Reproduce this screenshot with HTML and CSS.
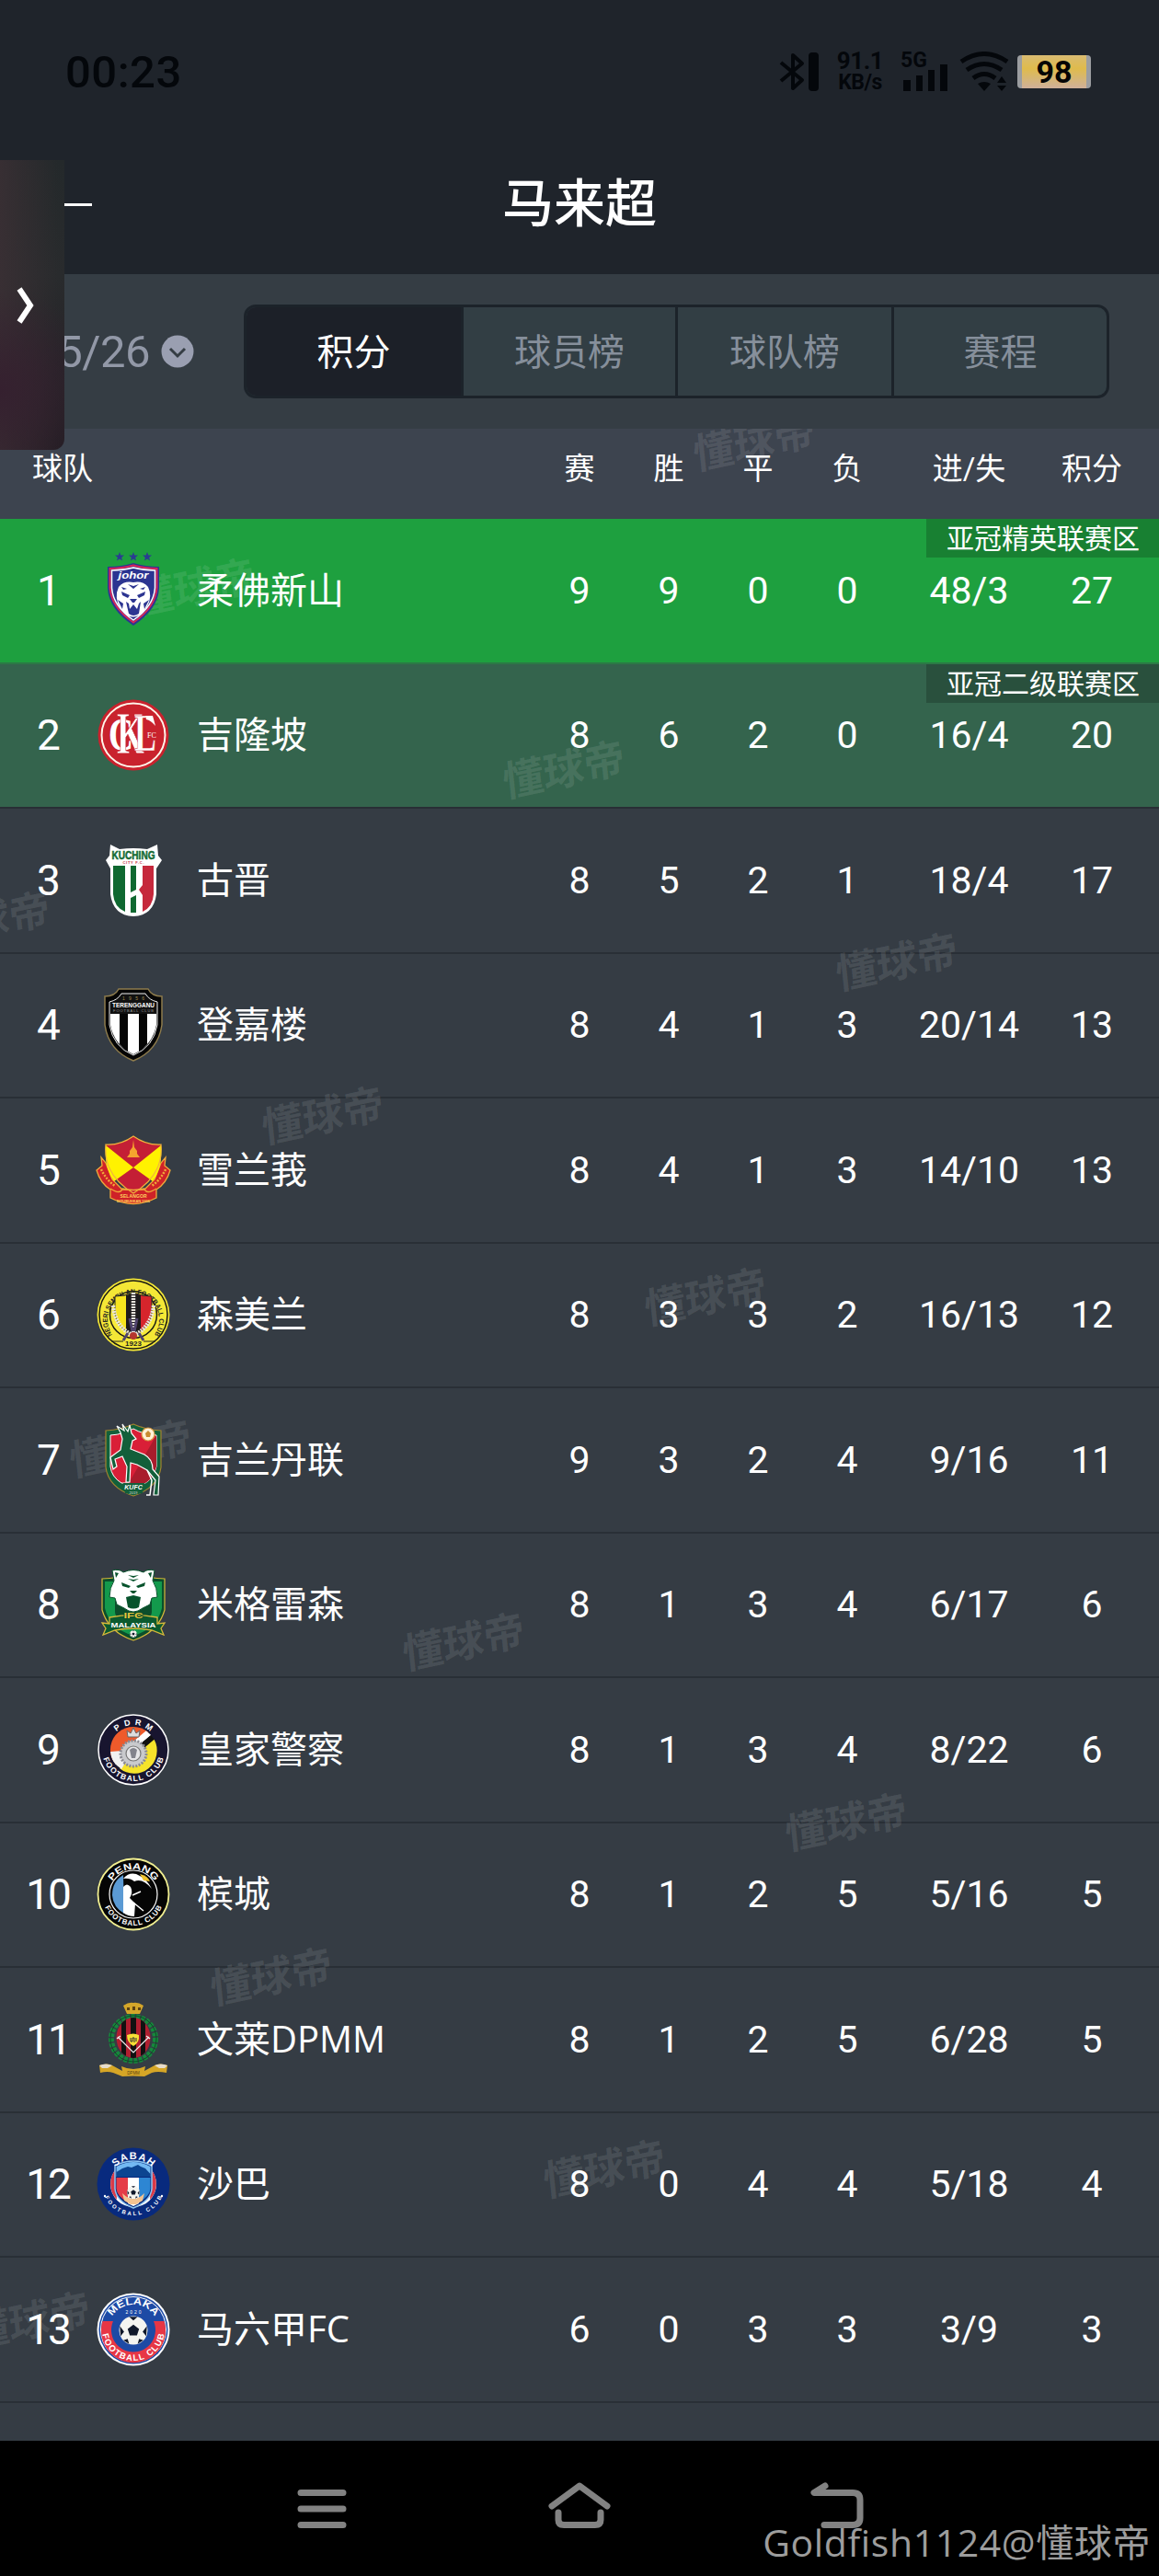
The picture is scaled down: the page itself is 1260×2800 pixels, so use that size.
FILE: index.html
```
<!DOCTYPE html>
<html lang="zh-CN">
<head>
    <meta charset="UTF-8">
    <meta name="viewport" content="width=device-width, initial-scale=1.0">
    <title>马来超</title>
    <link rel="stylesheet" href="styles.css">
</head>
<body>
    <!-- shared arcs for the round crests -->
    <svg class="defs" width="0" height="0">
        <defs>
            <path id="arcTop" d="M13 40 A27 27 0 0 1 67 40"/>
            <path id="arcRing" d="M16 60 A28 28 0 1 1 64 60"/>
            <path id="arcBottom" d="M6 40 A34 34 0 0 0 74 40"/>
            <g id="ball">
                <circle r="10" fill="#f4f4f0"/>
                <path d="M0 -4 L4 -1 L2.5 3.5 H-2.5 L-4 -1Z M-3 -9.5 H3 L0 -7Z M9.5 -3 L9 4 L6.5 1Z M-9.5 -3 L-9 4 L-6.5 1Z M4 6 L7 7 L3 9.5Z M-4 6 L-7 7 L-3 9.5Z" fill="#10182a"/>
            </g>
        </defs>
    </svg>

    <header class="top">
        <div class="status">
            <span class="time">00:23</span>
            <div class="status-icons">
                <svg class="bt" width="44" height="44" viewBox="0 0 44 44">
                    <path d="M2 12 L25 31 L15 40 V4 L25 13 L2 32" fill="none" stroke="#04070b" stroke-width="4" stroke-linejoin="round"/>
                    <rect x="32" y="1" width="11" height="42" rx="4" fill="#04070b"/>
                </svg>
                <div class="speed"><span>91.1</span><small>KB/s</small></div>
                <svg class="signal" width="52" height="44" viewBox="0 0 52 44">
                    <text x="0" y="17">5G</text>
                    <path d="M3 31h8v12h-8z M17 26h7v17h-7z M30 20h7v23h-7z M43 14h8v29h-8z" fill="#04070b"/>
                </svg>
                <svg class="wifi" width="54" height="44" viewBox="0 0 54 44">
                    <g fill="none" stroke="#04070b" stroke-width="5">
                        <path d="M2 11 Q27 -6 52 11"/>
                        <path d="M8 20 Q27 7 46 20"/>
                        <path d="M15 29 Q27 20 39 29"/>
                    </g>
                    <path d="M20 35 Q27 31 34 35 L27 43Z M41 34 L46 27 L51 34Z M41 37 H51 L46 43Z" fill="#04070b"/>
                </svg>
                <span class="battery">98</span>
            </div>
        </div>
        <div class="title-bar">
            <span class="back"></span>
            <h1>马来超</h1>
        </div>
    </header>

    <nav class="filter">
        <div class="season">
            <span>2025/26</span>
            <svg width="36" height="36" viewBox="0 0 36 36">
                <circle cx="18" cy="18" r="17.5" fill="#9a9fb1"/>
                <path d="M10 15 L18 23 L26 15" fill="none" stroke="#353d44" stroke-width="3"/>
            </svg>
        </div>
        <div class="tabs">
            <span class="tab active">积分</span>
            <span class="tab">球员榜</span>
            <span class="tab">球队榜</span>
            <span class="tab">赛程</span>
        </div>
    </nav>

    <main class="table">
        <div class="marks">
            <span style="left: 820px; top: 16px">懂球帝</span>
            <span style="left: 211px; top: 174px">懂球帝</span>
            <span style="left: 613px; top: 372px">懂球帝</span>
            <span style="left: 975px; top: 581px">懂球帝</span>
            <span style="left: -12px; top: 536px">懂球帝</span>
            <span style="left: 351px; top: 748px">懂球帝</span>
            <span style="left: 767px; top: 945px">懂球帝</span>
            <span style="left: 142px; top: 1110px">懂球帝</span>
            <span style="left: 504px; top: 1320px">懂球帝</span>
            <span style="left: 920px; top: 1516px">懂球帝</span>
            <span style="left: 295px; top: 1684px">懂球帝</span>
            <span style="left: 657px; top: 1893px">懂球帝</span>
            <span style="left: 32px; top: 2058px">懂球帝</span>
        </div>

        <div class="row head">
            <b class="team">球队</b><b>赛</b><b>胜</b><b>平</b><b>负</b><b>进/失</b><b>积分</b>
        </div>

        <div class="row acl-elite">
            <i>1</i>
            <svg class="crest" viewBox="0 0 80 80">
                <path d="M25 -2 l1.3 3.4 3.7 .2 -2.9 2.3 1 3.6 -3.1 -2 -3.1 2 1 -3.6 -2.9 -2.3 3.7 -.2Z M40 -2 l1.3 3.4 3.7 .2 -2.9 2.3 1 3.6 -3.1 -2 -3.1 2 1 -3.6 -2.9 -2.3 3.7 -.2Z M55 -2 l1.3 3.4 3.7 .2 -2.9 2.3 1 3.6 -3.1 -2 -3.1 2 1 -3.6 -2.9 -2.3 3.7 -.2Z" fill="#2a3b92"/>
                <path d="M12 14 Q27 14 40 10 Q53 14 68 14 V37 Q67 60 40 78 Q13 60 12 37Z" fill="#2c3591"/>
                <path d="M14.500 16 Q28 16 40 12.500 Q52 16 65.500 16 V37 Q64 58 40 74.500 Q16 58 14.500 37Z" fill="#2c3591" stroke="#d8245a" stroke-width="2"/>
                <path d="M16.500 18 Q29 18 40 15 Q51 18 63.500 18 V37 Q62 57 40 72 Q18 57 16.500 37Z" fill="#2c3591" stroke="#fff" stroke-width="1.500"/>
                <text x="40" y="27" font-size="10" font-weight="bold" font-style="italic" fill="#fff" text-anchor="middle" textLength="33" lengthAdjust="spacingAndGlyphs">johor</text>
                <path d="M24 36 Q30 29 40 31 Q50 29 56 36 Q61 46 55 57 L51 63 Q40 73 31 65 Q20 55 22 42Z" fill="#fff"/>
                <path d="M27 41 L36 45 L34 48 L28 45Z M53 41 L44 45 L46 48 L52 45Z M36 49 H44 L41 53 H39Z M34 33 L40 38 L46 33 L40 35Z M32 52 L35 54 L36 60 L40 55 L44 60 L46 54 L48 52 L46 65 Q40 69 35 65Z M23 50 L29 54 L28 60Z M57 50 L51 54 L52 60Z M27 36 L33 38 L29 39Z M53 36 L47 38 L51 39Z" fill="#2c3591"/>
            </svg>
            <strong>柔佛新山</strong>
            <span>9</span><span>9</span><span>0</span><span>0</span><span>48/3</span><span>27</span>
            <em>亚冠精英联赛区</em>
        </div>

        <div class="row acl-two">
            <i>2</i>
            <svg class="crest" viewBox="0 0 80 80">
                <circle cx="40" cy="40" r="38.500" fill="#c9222d"/>
                <circle cx="40" cy="40" r="34.500" fill="none" stroke="#fff5ea" stroke-width="2"/>
                <g fill="#fff" font-family="Liberation Serif, serif" font-weight="bold">
                    <text x="13" y="56" font-size="50" textLength="27" lengthAdjust="spacingAndGlyphs">C</text>
                    <text x="22" y="60" font-size="66" textLength="30" lengthAdjust="spacingAndGlyphs" stroke="#c9222d" stroke-width=".8">K</text>
                    <text x="41" y="57" font-size="58" textLength="24" lengthAdjust="spacingAndGlyphs" stroke="#c9222d" stroke-width=".6">L</text>
                    <text x="55" y="43" font-size="8" font-weight="normal">FC</text>
                </g>
                <path d="M53 19 H61 L64 30 Q59 24 54 23" fill="#fff"/>
            </svg>
            <strong>吉隆坡</strong>
            <span>8</span><span>6</span><span>2</span><span>0</span><span>16/4</span><span>20</span>
            <em>亚冠二级联赛区</em>
        </div>

        <div class="row">
            <i>3</i>
            <svg class="crest" viewBox="0 0 80 80">
                <path d="M15 1 L25 6 Q40 4 55 6 L66 1 L67 13 L71 18 L65 27 V55 Q62 78 40 79 Q18 78 15 55 V27 L10 18 L14 13Z" fill="#fff"/>
                <text x="40" y="17" font-size="12" font-weight="bold" fill="#156b35" stroke="#156b35" stroke-width=".5" text-anchor="middle" textLength="47" lengthAdjust="spacingAndGlyphs">KUCHING</text>
                <text x="40" y="22" font-size="4" font-weight="bold" fill="#c22c3c" text-anchor="middle" textLength="23">CITY F.C.</text>
                <path d="M18 24 H31 V74 Q19 69 18 55Z" fill="#0f6830"/>
                <path d="M37 24 H43 V50 L37 53Z M37 59 L43 56 V75 H37Z" fill="#0f6830"/>
                <path d="M50 24 H62 V55 Q61 69 50 74 V56 L46 50 L50 45Z" fill="#c6283c"/>
            </svg>
            <strong>古晋</strong>
            <span>8</span><span>5</span><span>2</span><span>1</span><span>18/4</span><span>17</span>
        </div>

        <div class="row">
            <i>4</i>
            <svg class="crest" viewBox="0 0 80 80">
                <path d="M24 1 H56 Q60 9 71 9 V40 Q67 68 40 79 Q13 68 9 40 V9 Q20 9 24 1Z" fill="#050505" stroke="#8d7b4c" stroke-width="1.500"/>
                <path d="M27 6 H53 Q57 13 66 15 V40 Q62 64 40 73 Q18 64 14 40 V15 Q23 13 27 6Z" fill="#111" stroke="#eee" stroke-width="1"/>
                <path d="M15 28 H65 V40 Q61 62 40 72 Q19 62 15 40Z" fill="#fff"/>
                <path d="M25 28 H34 V69 Q29 66 25 61Z M46 28 H55 V61 Q51 66 46 69Z" fill="#050505"/>
                <text x="40" y="13" font-size="5" fill="#a08a50" text-anchor="middle" textLength="24">1956</text>
                <text x="40" y="21" font-size="8" font-weight="bold" fill="#fff" text-anchor="middle" textLength="46" lengthAdjust="spacingAndGlyphs">TERENGGANU</text>
                <text x="40" y="26" font-size="4" fill="#999" text-anchor="middle" textLength="44">FOOTBALL CLUB</text>
            </svg>
            <strong>登嘉楼</strong>
            <span>8</span><span>4</span><span>1</span><span>3</span><span>20/14</span><span>13</span>
        </div>

        <div class="row">
            <i>5</i>
            <svg class="crest" viewBox="0 0 80 80">
                <path d="M5 26 L10 32 L17 50 L28 61 H52 L63 50 L70 32 L75 26 L74 35 L80 40 Q76 54 65 61 L65 70 Q40 83 15 70 L15 61 Q4 54 0 40 L6 35Z" fill="#cf2228" stroke="#f0a93a" stroke-width="1.300"/>
                <path d="M40 3 Q54 13 70 12 Q73 45 40 65 Q7 45 10 12 Q26 13 40 3Z" fill="#c41f35"/>
                <path d="M10 13 L40 37 L19 52 Q8 38 10 13Z M70 13 L40 37 L61 52 Q72 38 70 13Z" fill="#fff200"/>
                <path d="M40 3 Q54 13 70 12 Q73 45 40 65 Q7 45 10 12 Q26 13 40 3Z" fill="none" stroke="#f2b63c" stroke-width="1.200"/>
                <path d="M40 7 L41 15 L44 19 V22 L47 26 H33 L36 22 V19 L39 15Z" fill="#f5a52e"/>
                <path d="M15 60 Q26 67 28 60 Q40 63 52 60 Q54 67 65 60" fill="none" stroke="#f0a93a" stroke-width="1.300"/>
                <text x="40" y="70" font-size="5" font-weight="bold" fill="#ffd15c" text-anchor="middle" textLength="29">SELANGOR</text>
                <text x="40" y="75" font-size="4" font-weight="bold" fill="#ffd15c" text-anchor="middle" textLength="36">DITUBUHKAN 1936</text>
                <path d="M5 39 Q10 50 20 57 M75 39 Q70 50 60 57" fill="none" stroke="#f0a93a" stroke-width="2.500" stroke-dasharray="2 1.500"/>
            </svg>
            <strong>雪兰莪</strong>
            <span>8</span><span>4</span><span>1</span><span>3</span><span>14/10</span><span>13</span>
        </div>

        <div class="row">
            <i>6</i>
            <svg class="crest" viewBox="0 0 80 80">
                <circle cx="40" cy="40" r="39.500" fill="#f4e736"/>
                <circle cx="40" cy="40" r="37" fill="none" stroke="#1a1a14" stroke-width="1.500"/>
                <circle cx="40" cy="40" r="25.500" fill="#f7ea3a" stroke="#1a1a14" stroke-width="1.500"/>
                <text font-size="7.500" font-weight="bold" fill="#222"><textPath href="#arcRing" startOffset="50%" text-anchor="middle" textLength="122" lengthAdjust="spacingAndGlyphs">NEGERI SEMBILAN FOOTBALL CLUB</textPath></text>
                <path d="M20 20 Q31 20 40 16 V62 Q21 54 20 38Z" fill="#f7e41e" stroke="#222"/>
                <path d="M40 16 Q49 20 60 20 V38 Q59 54 40 62Z" fill="#d6252c" stroke="#222"/>
                <path d="M32 19 Q36 18 40 16 Q44 18 48 19 V58 L40 62 L32 58Z" fill="#1d1a1c"/>
                <path d="M40 16 V63 M18 30 Q20 52 38 62 M62 30 Q60 52 42 62" fill="none" stroke="#e8e4dc" stroke-width="4.500" stroke-dasharray="2 1"/>
                <path d="M34 60 L29 68 M46 60 L51 68 M36 44 L39 58 M44 44 L41 58" stroke="#50446e" stroke-width="3"/>
                <circle cx="40" cy="63" r="4" fill="#b5352e"/>
                <path d="M16 69 H29 M51 69 H64" stroke="#222"/>
                <text x="40" y="74" font-size="8" font-weight="bold" fill="#222" text-anchor="middle">1923</text>
            </svg>
            <strong>森美兰</strong>
            <span>8</span><span>3</span><span>3</span><span>2</span><span>16/13</span><span>12</span>
        </div>

        <div class="row">
            <i>7</i>
            <svg class="crest" viewBox="0 0 80 80">
                <path d="M10 8 Q27 7 40 1 Q53 7 70 8 V48 Q67 70 40 79 Q13 70 10 48Z" fill="#12603a" stroke="#a3842e" stroke-width="1.200"/>
                <path d="M15 13 Q30 12 40 6 Q50 12 65 13 V47 Q62 60 53 65 H27 Q16 58 15 47Z" fill="#d91f37" stroke="#fff" stroke-width="1"/>
                <path d="M65 13 V47 Q62 60 53 65 H35Z" fill="#a91c2c"/>
                <circle cx="56" cy="12" r="7" fill="#fff2d8" stroke="#d89a41" stroke-width="1.200"/>
                <path d="M56 8 l3 3 -1 4 h-4 l-1 -4Z" fill="#c98c31"/>
                <path d="M22 3 L30 8 L28 1 L34 9 L36 2 L38 11 L43 17 L39 19 L37 28 L52 34 Q61 39 61 50 L68 58 L67 78 H62 L64 62 L55 51 L44 45 L37 43 L36 64 H32 L33 47 L28 36 L20 39 L22 47 L18 50 L15 37 L26 29 L28 17 L26 10Z" fill="#135f3a" stroke="#fff" stroke-width="1.200"/>
                <path d="M55 51 L60 62 L58 78 H54" fill="none" stroke="#fff" stroke-width="1.500"/>
                <path d="M29 65 H52 L50 76 L40 78 L31 76Z" fill="#135f3a"/>
                <text x="40" y="72" font-size="7" font-weight="bold" font-style="italic" fill="#fff" text-anchor="middle">KUFC</text>
                <text x="40" y="77" font-size="4" fill="#ddd" text-anchor="middle">2019</text>
            </svg>
            <strong>吉兰丹联</strong>
            <span>9</span><span>3</span><span>2</span><span>4</span><span>9/16</span><span>11</span>
        </div>

        <div class="row">
            <i>8</i>
            <svg class="crest" viewBox="0 0 80 80">
                <path d="M6 12 Q23 12 40 5 Q57 12 74 12 V46 Q67 70 40 79 Q13 70 6 46Z" fill="#0b4e2b" stroke="#d5b83a" stroke-width="1.200"/>
                <path d="M9 15 L20 15 V48 Q20 58 40 60 Q60 58 60 48 V15 L71 15 V44 Q66 66 40 74 Q14 66 9 44Z" fill="#139a4c"/>
                <path d="M17 3 Q25 1 29 5 Q40 0 51 5 Q55 1 63 3 L61 14 Q66 22 66 32 L60 33 L58 40 L50 44 Q40 52 30 44 L22 40 L20 33 L14 32 Q14 22 19 14Z" fill="#fff" stroke="#07532c"/>
                <path d="M27 16 L37 20 L35 22 L28 20Z M53 16 L43 20 L45 22 L52 20Z M36 25 H44 L41 28 H39Z M32 32 L40 30 L48 32 L46 43 Q40 46 34 43Z M34 8 L40 11 L46 8 L40 9Z M34 12 L40 15 L46 12 L40 13Z M20 5 L24 6 L21 11Z M60 5 L56 6 L59 11Z" fill="#07532c"/>
                <path d="M6 60 L14 61 V54 Q40 49 66 54 V61 L74 60 L70 66 L73 73 L60 68 Q40 64 20 68 L7 73 L10 66Z" fill="#0b5a2e" stroke="#d5b83a" stroke-width="1.300"/>
                <text x="40" y="55" font-size="9" font-weight="bold" fill="#e3c53d" stroke="#0b4e2b" stroke-width="1.500" paint-order="stroke" text-anchor="middle" textLength="21" lengthAdjust="spacingAndGlyphs">IFC</text>
                <text x="40" y="65" font-size="8" font-weight="bold" fill="#fff" text-anchor="middle" textLength="49" lengthAdjust="spacingAndGlyphs">MALAYSIA</text>
                <use href="#ball" transform="translate(40 72) scale(.38)"/>
            </svg>
            <strong>米格雷森</strong>
            <span>8</span><span>1</span><span>3</span><span>4</span><span>6/17</span><span>6</span>
        </div>

        <div class="row">
            <i>9</i>
            <svg class="crest" viewBox="0 0 80 80">
                <circle cx="40" cy="40" r="38" fill="#18152f" stroke="#fff" stroke-width="1.500"/>
                <g transform="rotate(-40 40 40)">
                    <path d="M15.300 36 A25 25 0 0 1 64.700 36Z" fill="#ee5a2b"/>
                    <path d="M16 33 H64 L65 40 H15Z" fill="#fff"/>
                    <path d="M15 40 H65 L64.500 47 H15.500Z" fill="#111"/>
                    <path d="M15.500 46 H64.500 A25 25 0 0 1 15.500 46Z" fill="#f6e32b"/>
                </g>
                <path d="M15 42 L40 40 L27 61 Q16 54 15 42Z" fill="#f1f1f1"/>
                <circle cx="40" cy="44" r="14" fill="#c9cacd" stroke="#8a8a92" stroke-dasharray="2 1.500" stroke-width="3"/>
                <circle cx="40" cy="44" r="8" fill="#e6e6e8" stroke="#777" stroke-width="1.200"/>
                <path d="M36 40 Q40 36 44 40 L42 49 H38Z" fill="#82838c"/>
                <path d="M34 26 L33 19 L37 22 L40 16 L43 22 L47 19 L46 26Z" fill="#ddd" stroke="#666"/>
                <text font-size="9" font-weight="bold" fill="#fff"><textPath href="#arcTop" startOffset="50%" text-anchor="middle" textLength="40">PDRM</textPath></text>
                <text font-size="8.500" font-weight="bold" fill="#fff"><textPath href="#arcBottom" startOffset="50%" text-anchor="middle" textLength="88">FOOTBALL CLUB</textPath></text>
            </svg>
            <strong>皇家警察</strong>
            <span>8</span><span>1</span><span>3</span><span>4</span><span>8/22</span><span>6</span>
        </div>

        <div class="row">
            <i>10</i>
            <svg class="crest" viewBox="0 0 80 80">
                <circle cx="40" cy="40" r="38.500" fill="#050505" stroke="#f1ef91" stroke-width="1.800"/>
                <circle cx="40" cy="40" r="26" fill="none" stroke="#fff" stroke-width="1.200"/>
                <path d="M29 19 Q17 26 17 41 Q18 54 30 61Z" fill="#5b9ad4"/>
                <path d="M29 32 Q33 27 37 32 Q40 38 36 44 L42 50 L41 64 Q34 64 29 60Z" fill="#fff"/>
                <path d="M29 23 Q37 14 47 20 Q54 23 60 34 Q50 22 41 26 Q36 22 29 23Z" fill="#fff"/>
                <path d="M47 18 Q56 20 58 26 L51 25Z" fill="#f0c32e"/>
                <path d="M39 41 L48 37 M40 49 L51 58" stroke="#fff" stroke-width="1.500"/>
                <text font-size="10" font-weight="bold" fill="#fff"><textPath href="#arcTop" startOffset="50%" text-anchor="middle" textLength="55" lengthAdjust="spacingAndGlyphs">PENANG</textPath></text>
                <text font-size="8" font-weight="bold" fill="#fff"><textPath href="#arcBottom" startOffset="50%" text-anchor="middle" textLength="78">FOOTBALL CLUB</textPath></text>
            </svg>
            <strong>槟城</strong>
            <span>8</span><span>1</span><span>2</span><span>5</span><span>5/16</span><span>5</span>
        </div>

        <div class="row">
            <i>11</i>
            <svg class="crest" viewBox="0 0 80 80">
                <path d="M33 12 L29 3 Q35 -1 40 0 Q45 -1 51 3 L47 12Z" fill="#d4a62a"/>
                <path d="M33 5 h3 v3 h-3Z M39 4 h3 v4 h-3Z M45 5 h3 v3 h-3Z" fill="#5c4212"/>
                <circle cx="40" cy="39" r="24" fill="none" stroke="#16873c" stroke-width="6" stroke-dasharray="4 1.500"/>
                <circle cx="40" cy="39" r="25" fill="none" stroke="#0b4d24" stroke-width="1"/>
                <clipPath id="dpmm"><ellipse cx="40" cy="38" rx="18.500" ry="22"/></clipPath>
                <g clip-path="url(#dpmm)">
                    <path d="M20 14 H60 V62 H20Z" fill="#b01f30"/>
                    <path d="M27 14h5v48h-5Z M37 14h6v48h-6Z M48 14h5v48h-5Z" fill="#111"/>
                </g>
                <path d="M33 35 Q40 32 46 35 Q47 43 40 47 Q33 43 33 35Z" fill="#f7df35"/>
                <path d="M37 38 v4 h2 v-4 h2 v5 M43 38 v4" fill="none" stroke="#333"/>
                <path d="M23 37 L40 54 L57 37 M22 39 L26 36 M58 39 L54 36" fill="none" stroke="#eee" stroke-width="1.200"/>
                <path d="M3 68 Q12 65 17 68 L28 74 L27 69 Q40 75 53 69 L52 74 L63 68 Q68 65 77 68 L76 76 Q66 74 60 76 L52 80 Q40 79 28 80 L18 76 Q12 74 4 76Z" fill="#d6a626"/>
                <path d="M3 68 Q10 65 17 68 L12 71 L6 71Z M77 68 Q70 65 63 68 L68 71 L74 71Z" fill="#e6dccb"/>
                <text x="40" y="78" font-size="4.500" fill="#5c4212" text-anchor="middle">DPMM</text>
            </svg>
            <strong>文莱DPMM</strong>
            <span>8</span><span>1</span><span>2</span><span>5</span><span>6/28</span><span>5</span>
        </div>

        <div class="row">
            <i>12</i>
            <svg class="crest" viewBox="0 0 80 80">
                <circle cx="40" cy="40" r="39.500" fill="#082a7e"/>
                <circle cx="40" cy="40" r="25" fill="#fff"/>
                <path d="M20 25 A25 25 0 0 0 22 57Z M60 25 A25 25 0 0 1 58 57Z" fill="#d93a48"/>
                <path d="M20 20 Q40 10 60 20 V45 Q59 58 40 66 Q21 58 20 45Z" fill="#082a7e" stroke="#8dc6f2" stroke-width="1.500"/>
                <path d="M21.500 21 Q40 11 58.500 21 V32 H21.500Z" fill="#73b9f2"/>
                <path d="M21.500 27 L28 23 L34 21 L38 22 L45 19 L48 21 L53 23 L58.500 29 V32 H21.500Z" fill="#0c4591"/>
                <path d="M21.500 33 H34 V60 Q22 53 21.500 45Z" fill="#e53c48"/>
                <path d="M34 33 H46 V61 L40 64 L34 61Z" fill="#fff"/>
                <path d="M46 33 H58.500 V45 Q58 53 46 60Z" fill="#2d86d3"/>
                <path d="M28 50 Q40 62 52 50 L50 58 L43 62 H37 L30 58Z" fill="#f3c391"/>
                <use href="#ball" transform="translate(40 49) scale(.7)"/>
                <text font-size="11" font-weight="bold" fill="#fff"><textPath href="#arcTop" startOffset="50%" text-anchor="middle" textLength="44">SABAH</textPath></text>
                <text font-size="6" font-weight="bold" fill="#fff"><textPath href="#arcBottom" startOffset="50%" text-anchor="middle" textLength="78">FOOTBALL CLUB</textPath></text>
                <circle cx="9" cy="53" r="1.200" fill="#fff"/><circle cx="71" cy="53" r="1.200" fill="#fff"/>
            </svg>
            <strong>沙巴</strong>
            <span>8</span><span>0</span><span>4</span><span>4</span><span>5/18</span><span>4</span>
        </div>

        <div class="row">
            <i>13</i>
            <svg class="crest" viewBox="0 0 80 80">
                <circle cx="40" cy="40" r="39.500" fill="#fff"/>
                <circle cx="40" cy="40" r="37.500" fill="#1d4aa5"/>
                <circle cx="40" cy="40" r="35.500" fill="#1d4aa5" stroke="#fff" stroke-width="1"/>
                <path d="M6.500 31 A35 35 0 1 0 73.500 31 L62 31 A24 24 0 1 1 18 31Z" fill="#e73645"/>
                <use href="#ball" transform="translate(40 41) scale(1.550)"/>
                <text font-size="11" font-weight="bold" fill="#fff"><textPath href="#arcTop" startOffset="50%" text-anchor="middle" textLength="55" lengthAdjust="spacingAndGlyphs">MELAKA</textPath></text>
                <text x="40" y="23" font-size="5" fill="#fff" text-anchor="middle" textLength="17">2020</text>
                <text font-size="9.500" font-weight="bold" fill="#fff"><textPath href="#arcBottom" startOffset="50%" text-anchor="middle" textLength="96">FOOTBALL CLUB</textPath></text>
            </svg>
            <strong>马六甲FC</strong>
            <span>6</span><span>0</span><span>3</span><span>3</span><span>3/9</span><span>3</span>
        </div>
    </main>

    <footer class="sysnav">
        <svg width="60" height="60" viewBox="0 0 60 60">
            <path d="M7 12.500 H53 M7 30 H53 M7 47.500 H53"/>
        </svg>
        <svg width="70" height="60" viewBox="0 0 70 60">
            <path d="M5 27 L35 5 L65 27 M12 34 V42 Q12 47.500 18 47.500 H52 Q58 47.500 58 42 V34"/>
        </svg>
        <svg width="60" height="60" viewBox="0 0 60 60">
            <path d="M17 5 L5 12.500 H47 Q55 12.500 55 20 V40 Q55 47.500 47 47.500 H16"/>
        </svg>
        <p class="credit">Goldfish1124@懂球帝</p>
    </footer>

    <!-- edge drawer handle -->
    <aside class="drawer">
        <svg width="24" height="44" viewBox="0 0 24 44">
            <path d="M4 4 L16 22 L4 40" fill="none" stroke="#fff" stroke-width="6"/>
        </svg>
    </aside>
</body>
</html>
```
FILE: styles.css
```
* { box-sizing: border-box; }
body { position: relative; width: 1260px; height: 2800px; margin: 0; overflow: hidden; background: #353c44; color: #fff; font-family: Roboto, "Noto Sans CJK SC", sans-serif; }
.defs { position: absolute; }

/* status bar + title */
.top { height: 298px; background: #1f242b; }
.status { display: flex; justify-content: space-between; height: 156px; padding: 0 74px 0 71px; align-items: center; color: #04070b; }
.time { font-size: 49px; font-weight: 500; letter-spacing: 0.5px; }
.status-icons { display: flex; align-items: center; }
.speed { display: flex; flex-direction: column; width: 52px; margin-left: 18px; font-size: 26px; line-height: 23px; font-weight: 700; text-align: center; letter-spacing: -0.5px; }
.speed small { font-size: 23px; line-height: 23px; }
.signal { margin-left: 18px; overflow: visible; }
.signal text { font-size: 23px; font-weight: 700; fill: #04070b; }
.wifi { margin-left: 12px; }
.battery { width: 80px; height: 36px; margin-left: 9px; border: solid #9b9da0; border-width: 0 5px; border-radius: 4px; background: linear-gradient(#d9bb72, #dfbb4c 40%, #d5b57a 75%, #cfb09a); color: #050505; font-size: 34px; line-height: 36px; font-weight: 700; text-align: center; }
.title-bar { display: flex; align-items: center; height: 132px; }
.back { width: 60px; height: 3px; margin-left: 40px; background: #fff; }
h1 { flex: 1; margin: 0 100px 0 0; font-size: 56px; font-weight: 500; line-height: 80px; text-align: center; }

/* season + tabs */
.filter { display: flex; align-items: center; height: 168px; background: #353d44; }
.season { display: flex; align-items: center; justify-content: flex-end; width: 211px; gap: 12px; color: #9298a7; font-size: 49px; letter-spacing: -0.5px; }
.season svg { flex-shrink: 0; }
.tabs { display: grid; grid-template-columns: 233px 233px 235px 234px; width: 941px; height: 102px; margin-left: 54px; overflow: hidden; border: 3px solid #1c232a; border-radius: 13px; background: #323e44; }
.tab { border-left: 3px solid #1c232a; color: #868f9b; font-size: 40px; line-height: 99px; text-align: center; }
.tab:first-child { border-left: 0; }
.tab.active { background: #1c2028; color: #fff; }

/* standings */
.table { position: relative; height: 2187px; overflow: hidden; }
.row { display: grid; grid-template-columns: 104px 82px 395.5px repeat(4, 97px) 168px 99px; align-items: center; height: 157.5px; border-bottom: 2px solid #292f36; text-align: center; }
.row.head { grid-template-columns: 581.5px repeat(4, 97px) 168px 99px; height: 98px; border: 0; background: #3d444f; }
.row b { position: relative; z-index: 2; top: -5px; font-size: 33px; font-weight: 400; line-height: 48px; }
.row .team { padding-left: 35px; text-align: left; }
/* watermark sits over row backgrounds, under their content */
.row i, .row span, .row strong, .crest { position: relative; z-index: 2; }
.row i { font-size: 46px; font-style: normal; letter-spacing: -2px; }
.row span { font-size: 41px; }
.row strong { top: -1px; padding-left: 28px; font-family: "Open Sans", "Noto Sans CJK SC", sans-serif; font-size: 40px; font-weight: 400; line-height: 56px; text-align: left; }
.row em { position: absolute; z-index: 2; right: 0; top: 0; width: 253px; height: 42px; padding-left: 22px; background: rgba(0, 0, 0, 0.2); font-size: 30px; font-style: normal; line-height: 43px; text-align: left; white-space: nowrap; }
.acl-elite, .acl-two { position: relative; }
.acl-elite { background: #1ea03f; border-bottom-color: #2b7a45; }
.acl-two { background: #34644d; }
.crest { width: 80px; height: 80px; margin-left: 1px; overflow: visible; font-family: "Liberation Sans", sans-serif; }

.marks { position: absolute; inset: 0; z-index: 1; }
.marks span { position: absolute; font-size: 45px; font-weight: 700; line-height: 50px; white-space: nowrap; color: rgba(255, 255, 255, 0.1); transform: translate(-50%, -50%) rotate(-12deg) skewX(-6deg); }

/* system navigation */
.sysnav { position: relative; display: flex; justify-content: space-between; height: 147px; padding: 44px 320px 0; background: #000; }
.sysnav path { fill: none; stroke: #828282; stroke-width: 7; stroke-linecap: round; stroke-linejoin: round; }
.credit { position: absolute; right: 9px; bottom: 10px; margin: 0; color: #9d9d9d; font-family: "Open Sans", "Noto Sans CJK SC", sans-serif; font-size: 41px; letter-spacing: 0.6px; line-height: 54px; white-space: nowrap; }

.drawer { position: absolute; left: 0; top: 174px; z-index: 5; display: flex; align-items: center; width: 70px; height: 315px; padding-left: 17px; border-radius: 0 0 12px 0; background: radial-gradient(circle at 0 250px, #35202f, transparent 110px), linear-gradient(90deg, rgba(60, 48, 53, 0.8), transparent 90%), linear-gradient(#24292b, #292b2d 40%, #241e24); }
```
